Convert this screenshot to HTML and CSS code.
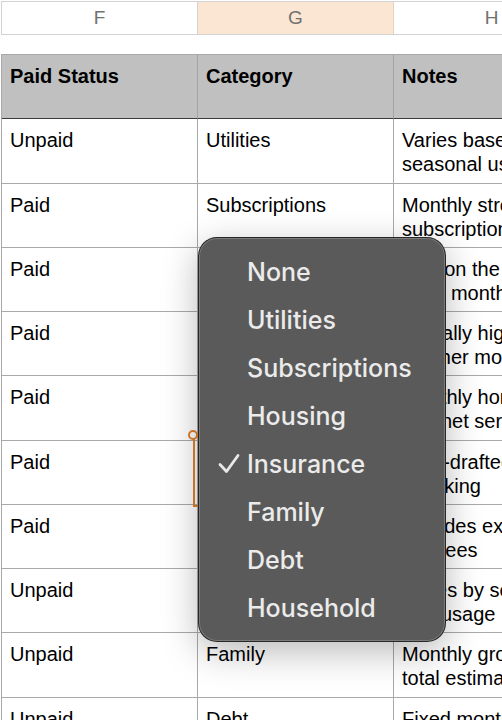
FILE: index.html
```html
<!DOCTYPE html>
<html>
<head>
<meta charset="utf-8">
<link rel="stylesheet" href="styles.css">
</head>
<body>
<div class="sheet">
  <div class="colbar">
    <div class="col">F</div>
    <div class="col active">G</div>
    <div class="col">H</div>
  </div>
  <div class="grid">
    <div class="cell head">Paid Status</div>
    <div class="cell head">Category</div>
    <div class="cell head">Notes</div>

    <div class="cell">Unpaid</div>
    <div class="cell">Utilities</div>
    <div class="cell">Varies based on<br>seasonal usage</div>

    <div class="cell">Paid</div>
    <div class="cell">Subscriptions</div>
    <div class="cell">Monthly streaming<br>subscriptions</div>

    <div class="cell">Paid</div>
    <div class="cell"></div>
    <div class="cell">Due on the 1st of<br>each month</div>

    <div class="cell">Paid</div>
    <div class="cell"></div>
    <div class="cell">Actually higher than<br>in other months</div>

    <div class="cell">Paid</div>
    <div class="cell"></div>
    <div class="cell">Monthly home<br>internet service</div>

    <div class="cell">Paid</div>
    <div class="cell"></div>
    <div class="cell">Auto-drafted from<br>checking</div>

    <div class="cell">Paid</div>
    <div class="cell"></div>
    <div class="cell">Includes extra<br>late fees</div>

    <div class="cell">Unpaid</div>
    <div class="cell"></div>
    <div class="cell">Varies by season<br>and usage</div>

    <div class="cell">Unpaid</div>
    <div class="cell">Family</div>
    <div class="cell">Monthly groceries,<br>total estimate</div>

    <div class="cell">Unpaid</div>
    <div class="cell">Debt</div>
    <div class="cell">Fixed monthly payment</div>
  </div>

  <div class="sel"><span class="handle"></span></div>

  <div class="menu">
    <div class="item">None</div>
    <div class="item">Utilities</div>
    <div class="item">Subscriptions</div>
    <div class="item">Housing</div>
    <div class="item checked"><svg class="check" width="22" height="22" viewBox="0 0 22 22"><path d="M2 11.5 L8.5 18.5 L20 2.5" fill="none" stroke="#e9e9e9" stroke-width="2.8" stroke-linecap="round" stroke-linejoin="round"/></svg>Insurance</div>
    <div class="item">Family</div>
    <div class="item">Debt</div>
    <div class="item">Household</div>
  </div>
</div>
</body>
</html>
```

FILE: styles.css
```css
html, body {
  margin: 0;
  padding: 0;
  background: #fff;
}

.sheet {
  position: relative;
  width: 502px;
  height: 720px;
  overflow: hidden;
  font-family: "Liberation Sans", Arial, sans-serif;
}

.colbar {
  display: grid;
  grid-template-columns: 196px 196px 196px;
  width: max-content;
  height: 34px;
  box-sizing: border-box;
  margin-top: 1px;
  margin-left: 1px;
  border-top: 1px solid #d3d3d3;
  border-bottom: 1px solid #d3d3d3;
  border-left: 1px solid #d3d3d3;
}

.col {
  display: flex;
  align-items: center;
  justify-content: center;
  border-right: 1px solid #d3d3d3;
  font-size: 19px;
  color: #707070;
}

.col.active {
  background: #fbe6d3;
  border-right-color: #e6d2c0;
}

.grid {
  display: grid;
  grid-template-columns: 196px 196px 196px;
  grid-auto-rows: 64.25px;
  width: max-content;
  margin-top: 19px;
  margin-left: 1px;
  border-left: 1px solid #a9a9a9;
  border-top: 1px solid #a9a9a9;
}

.cell {
  box-sizing: border-box;
  padding: 9px 8px 0 8px;
  border-right: 1px solid #a9a9a9;
  border-bottom: 1px solid #a9a9a9;
  font-size: 20px;
  line-height: 24px;
  color: #000;
  white-space: nowrap;
  overflow: hidden;
}

.cell.head {
  background: #c0c0c0;
  font-weight: bold;
  border-bottom-color: #3c3c3c;
  border-right-color: #a3a3a3;
}

.sel {
  position: absolute;
  left: 193px;
  top: 435px;
  width: 204px;
  height: 72px;
  box-sizing: border-box;
  border: 2px solid #e0812c;
}

.handle {
  position: absolute;
  left: -7px;
  top: -7px;
  width: 10px;
  height: 10px;
  box-sizing: border-box;
  border: 2px solid #e0812c;
  border-radius: 50%;
  background: #fff;
}

.menu {
  position: absolute;
  left: 198px;
  top: 237px;
  width: 248px;
  height: 405px;
  box-sizing: border-box;
  padding: 10px 0;
  border-radius: 19px;
  border: 1px solid rgba(30, 30, 30, 0.85);
  background: #5a5a5a;
  box-shadow: inset 0 0 0 1px rgba(255, 255, 255, 0.2), 0 10px 36px rgba(0, 0, 0, 0.28);
  font-family: Inter, "Noto Sans", sans-serif;
}

.item {
  position: relative;
  display: flex;
  align-items: center;
  height: 48px;
  padding-left: 48px;
  font-size: 25px;
  font-weight: 500;
  color: #ebebeb;
}

.check {
  position: absolute;
  left: 19px;
  top: 13px;
}
```
